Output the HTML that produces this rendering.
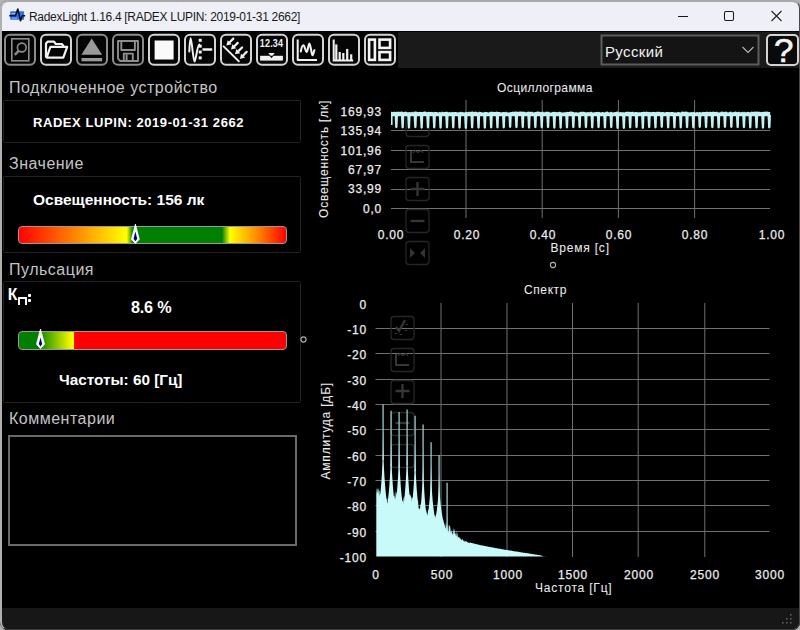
<!DOCTYPE html>
<html><head><meta charset="utf-8">
<style>
*{margin:0;padding:0;box-sizing:border-box}
html,body{width:800px;height:630px;overflow:hidden;background:#b4b4b4}
body{position:relative;font-family:"Liberation Sans",sans-serif}
.a{position:absolute}
#win{position:absolute;left:0;top:0;width:800px;height:630px;background:#000;border-radius:8px;overflow:hidden}
#frame{position:absolute;left:0;top:0;width:800px;height:630px;border-style:solid;border-width:2px 1.2px 1.2px 2px;border-color:#a8a8a8 #484848 #3c3c3c #b0b0b0;border-radius:8px;z-index:50}
#title{position:absolute;left:0;top:0;width:800px;height:31px;background:#eff0f7}
#ttext{position:absolute;left:29px;top:9.9px;font-size:12px;letter-spacing:-0.3px;color:#1a1a1a;white-space:nowrap}
#tb{position:absolute;left:0;top:31px;width:800px;height:36.5px;background:#1a1a1a}
.btn{position:absolute;top:34px;width:32px;height:32px}
.hdr{position:absolute;left:9px;font-size:16px;letter-spacing:0.5px;color:#c4c4c4;white-space:nowrap}
.box{position:absolute;left:3.4px;width:297.6px;border:1px solid #222;border-radius:1.5px}
.bold{position:absolute;font-weight:bold;color:#fff;white-space:nowrap}
.cl{position:absolute;font-size:12px;letter-spacing:0.8px;color:#ececec;white-space:nowrap;-webkit-text-stroke:0.25px #ececec}
.yl{text-align:right;width:60px}
.xl{text-align:center;width:50px}
#status{position:absolute;left:0;top:608px;width:800px;height:20.5px;background:#171717}
</style></head><body>
<div id="win">
  <div id="title">
    <svg class="a" style="left:8px;top:6px" width="20" height="18" viewBox="0 0 20 18">
      <rect x="2.2" y="5.2" width="13.9" height="8.6" rx="0.8" fill="#2f72f0"/>
      <path d="M3.5 7.5 L9 7.5 M4 12.2 L9 12.2" stroke="#9fc0ff" stroke-width="0.8"/>
      <path d="M1.2 9.7 L7.5 9.7 L9.8 3 L12.5 14.8 L14.3 9.7 L17.2 9.7" stroke="#111" stroke-width="1.6" fill="none" stroke-linejoin="round"/>
    </svg>
    <div id="ttext">RadexLight 1.16.4 [RADEX LUPIN: 2019-01-31 2662]</div>
    <svg class="a" style="left:670px;top:0" width="128" height="31">
      <line x1="8" y1="16.5" x2="18" y2="16.5" stroke="#1a1a1a" stroke-width="1"/>
      <rect x="54.5" y="11.5" width="9" height="9" rx="1.5" stroke="#1a1a1a" stroke-width="1.05" fill="none"/>
      <path d="M101.5 11 L111.5 21 M111.5 11 L101.5 21" stroke="#222" stroke-width="1.1"/>
    </svg>
  </div>
  <div id="tb"></div>
<svg class="a" style="left:0;top:0" width="800" height="70" viewBox="0 0 800 70">
<rect x="0" y="31" width="800" height="1" fill="#000"/>
<rect x="2" y="31" width="396" height="37" fill="#000"/>
<rect x="5" y="34.7" width="30" height="30" rx="5" fill="#050505" stroke="#8c8c8c" stroke-width="2"/>
<rect x="41" y="34.7" width="30" height="30" rx="5" fill="#050505" stroke="#d4d4d4" stroke-width="2"/>
<rect x="77" y="34.7" width="30" height="30" rx="5" fill="#050505" stroke="#8c8c8c" stroke-width="2"/>
<rect x="113" y="34.7" width="30" height="30" rx="5" fill="#050505" stroke="#8c8c8c" stroke-width="2"/>
<rect x="149" y="34.7" width="30" height="30" rx="5" fill="#050505" stroke="#d4d4d4" stroke-width="2"/>
<rect x="185" y="34.7" width="30" height="30" rx="5" fill="#050505" stroke="#d4d4d4" stroke-width="2"/>
<rect x="221" y="34.7" width="30" height="30" rx="5" fill="#050505" stroke="#d4d4d4" stroke-width="2"/>
<rect x="257" y="34.7" width="30" height="30" rx="5" fill="#050505" stroke="#d4d4d4" stroke-width="2"/>
<rect x="293" y="34.7" width="30" height="30" rx="5" fill="#050505" stroke="#d4d4d4" stroke-width="2"/>
<rect x="329" y="34.7" width="30" height="30" rx="5" fill="#050505" stroke="#d4d4d4" stroke-width="2"/>
<rect x="365" y="34.7" width="30" height="30" rx="5" fill="#050505" stroke="#d4d4d4" stroke-width="2"/>

<!-- 1 search doc -->
<g stroke="#8c8c8c" stroke-width="1.6" fill="none">
<rect x="11.8" y="38.8" width="17" height="22"/>
<circle cx="21.8" cy="47.5" r="4.4"/>
<line x1="18.6" y1="50.8" x2="14.8" y2="54.8" stroke-width="2.4"/>
</g>
<!-- 2 folder -->
<g stroke="#f2f2f2" stroke-width="2.2" fill="none" stroke-linejoin="round">
<path d="M46 57.5 L46 43.5 L47.8 41.6 L54 41.6 L55.8 44 L61.8 44 L63.2 45.5 L63.2 46.6"/>
<path d="M46.6 57.6 L50.4 46.8 L67.2 46.8 L63.3 57.6 Z"/>
</g>
<!-- 3 eject -->
<g fill="#999">
<path d="M91.7 38.6 L102.1 54.8 L81.4 54.8 Z"/>
<rect x="81.5" y="58" width="20.6" height="3.3"/>
</g>
<!-- 4 floppy -->
<g stroke="#8e8e8e" stroke-width="1.9" fill="none" stroke-linejoin="round">
<path d="M118 41 L138 41 L138 61 L120.3 61 L118 58.7 Z"/>
<rect x="121.3" y="41" width="13.6" height="9"/>
<rect x="123.8" y="53.6" width="9" height="7.4"/>
<line x1="126.6" y1="54.2" x2="126.6" y2="60.5" stroke-width="2"/>
</g>
<!-- 5 stop -->
<rect x="154.6" y="40.5" width="19" height="19" fill="#fafafa"/>
<!-- 6 wave+dots -->
<g stroke="#f2f2f2" stroke-width="2" fill="none" stroke-linecap="round">
<path d="M189.3 51.5 C189.7 43, 190 38.3, 190.6 38.3 C191.8 38.5, 193.2 61.6, 194.5 61.6 C195.8 61.6, 197.3 44.8, 199.3 44.6"/>
<line x1="202.5" y1="49.5" x2="212.2" y2="49.5" stroke-width="2.4" stroke-linecap="butt"/>
</g>
<g fill="#f2f2f2"><rect x="198.7" y="38.8" width="3" height="3"/><rect x="198.7" y="44.7" width="3" height="3"/><rect x="198.7" y="50.5" width="3" height="3"/><rect x="198.7" y="56.4" width="3" height="3"/></g>
<!-- 7 diag arrows -->
<g fill="#f2f2f2">
<line x1="223.1" y1="45.9" x2="239.4" y2="61.9" stroke="#f2f2f2" stroke-width="2"/>
<line x1="233.3" y1="38.6" x2="229.68" y2="42.17" stroke="#f2f2f2" stroke-width="2.2" stroke-linecap="round"/>
<path d="M226.40 45.40 L227.71 40.18 L231.64 44.17 Z"/>
<line x1="237.8" y1="42.9" x2="234.30" y2="46.30" stroke="#f2f2f2" stroke-width="2.2" stroke-linecap="round"/>
<path d="M231.00 49.50 L232.35 44.29 L236.25 48.31 Z"/>
<line x1="242.1" y1="47.5" x2="238.32" y2="51.12" stroke="#f2f2f2" stroke-width="2.2" stroke-linecap="round"/>
<path d="M235.00 54.30 L236.39 49.10 L240.26 53.14 Z"/>
<line x1="246.7" y1="51.8" x2="243.08" y2="55.58" stroke="#f2f2f2" stroke-width="2.2" stroke-linecap="round"/>
<path d="M239.90 58.90 L241.06 53.64 L245.10 57.51 Z"/>
</g>
<!-- 8 12.34 -->
<text x="0" y="0" transform="translate(271.5 46.8) scale(0.9 1)" font-family="Liberation Sans" font-weight="bold" font-size="10" fill="#f2f2f2" text-anchor="middle" letter-spacing="0.2">12.34</text>
<rect x="260.1" y="55.8" width="22.8" height="4.8" fill="#f2f2f2"/>
<path d="M268.2 53 L274.8 53 L271.5 56.8 Z" fill="#f2f2f2"/><path d="M269.5 55.8 L273.5 55.8 L271.5 58.2 Z" fill="#0a0a0a"/>
<!-- 9 wave chart -->
<g stroke="#f2f2f2" stroke-width="2" fill="none" stroke-linecap="round" stroke-linejoin="round">
<path d="M297.7 39.5 L297.7 60.1 L317 60.1" stroke-linecap="butt"/>
<path d="M300.8 51.5 C301.8 46, 302.8 45.2, 303.6 45.3 C304.6 45.5, 305.6 52, 306.7 52 C307.8 52, 308.4 43.5, 309.4 43.5 C310.6 43.5, 311.4 55.2, 312.5 55.2 C313.4 55.2, 313.8 51.5, 314.4 50.3" stroke-width="2.1"/>
</g>
<!-- 10 histogram -->
<g stroke="#f2f2f2" stroke-width="2" fill="none">
<path d="M333.7 39.5 L333.7 60.5 L353.2 60.5"/>
<line x1="336.3" y1="44.4" x2="336.3" y2="60" stroke-width="2.2"/>
<line x1="339.7" y1="52" x2="339.7" y2="60" stroke-width="2.2"/>
<line x1="343.3" y1="53" x2="343.3" y2="60" stroke-width="2.2"/>
<line x1="347.2" y1="48.9" x2="347.2" y2="60" stroke-width="2.2"/>
<line x1="351.2" y1="54.3" x2="351.2" y2="60" stroke-width="2.2"/>
</g>
<!-- 11 layout -->
<g stroke="#f4f4f4" stroke-width="2.6" fill="none">
<rect x="369.1" y="39.6" width="5.8" height="20.3"/>
<rect x="379.5" y="39.6" width="10.6" height="8.3"/>
<rect x="379.5" y="52.1" width="10.6" height="7.8"/>
</g>

<!-- combobox -->
<rect x="601.5" y="35.5" width="157" height="29" fill="#141414" stroke="#5c5c5c" stroke-width="2"/>
<path d="M742.5 47 L748 52.5 L753.5 47" stroke="#b8b8b8" stroke-width="1.1" fill="none"/>
<rect x="767" y="35" width="31" height="30" rx="4" fill="#0a0a0a" stroke="#d4d4d4" stroke-width="2"/>
</svg>
<div class="a" style="left:605px;top:42.9px;font-size:15px;letter-spacing:0.35px;color:#f0f0f0;white-space:nowrap">Русский</div>
<div class="a" style="left:773.5px;top:31.8px;font-size:33px;color:#f4f4f4;white-space:nowrap;-webkit-text-stroke:0.6px #f4f4f4;transform:scaleX(1.06);transform-origin:0 0">?</div>

<div class="hdr" style="top:78.5px">Подключенное устройство</div>
<div class="box" style="top:100px;height:43px"></div>
<div class="bold" style="left:33px;top:115.2px;font-size:13px;letter-spacing:0.57px">RADEX LUPIN: 2019-01-31 2662</div>
<div class="hdr" style="top:155px">Значение</div>
<div class="box" style="top:175.5px;height:77px"></div>
<div class="bold" style="left:33px;top:191px;font-size:15.5px">Освещенность: 156 лк</div>
<div class="a" style="left:17.5px;top:225.6px;width:269px;height:18.4px;border:1.6px solid #9a989c;border-radius:4px;background:linear-gradient(90deg,#ff0000 0%,#ff8000 20%,#ffff00 40.3%,#008000 42.7%,#008000 76%,#ffff00 79%,#ff8000 90%,#ff0000 100%)"></div>
<svg class="a" style="left:125px;top:220px" width="21" height="28" viewBox="0 0 21 28">
<path d="M10.4 4.1 L14.3 19.3 L10.4 23.5 L6.5 19.3 Z" fill="#fff" stroke="#fff" stroke-width="0.8" stroke-linejoin="round"/>
<path d="M10.4 11.5 L12.2 18.8 L10.4 21.2 L8.6 18.8 Z" fill="#00007a"/>
</svg>
<div class="hdr" style="top:260.5px">Пульсация</div>
<div class="box" style="top:281px;height:122px"></div>
<div class="bold" style="left:7.7px;top:286.2px;font-size:15.8px">К</div>
<div class="a" style="left:18.3px;top:297.3px;width:8.8px;height:7.5px;border:2.6px solid #fafafa;border-bottom:none;border-radius:1px 1px 0 0"></div>
<div class="a" style="left:28px;top:294px;width:3.2px;height:2.8px;background:#fafafa;border-radius:0.8px"></div>
<div class="a" style="left:28px;top:299.3px;width:3.2px;height:2.8px;background:#fafafa;border-radius:0.8px"></div>
<div class="bold" style="left:131px;top:297.6px;font-size:16.2px;letter-spacing:-0.2px">8.6 %</div>
<div class="a" style="left:17.5px;top:331px;width:269px;height:18.6px;border:1.6px solid #9a989c;border-radius:4px;background:linear-gradient(90deg,#008000 0%,#008000 7%,#ffff00 20%,#ffff00 20.5%,#ff0000 20.8%,#ff0000 100%)"></div>
<svg class="a" style="left:30px;top:325px" width="21" height="28" viewBox="0 0 21 28">
<path d="M10.5 4.1 L14.5 19.2 L10.5 23.7 L6.5 19.2 Z" fill="#fff" stroke="#fff" stroke-width="0.8" stroke-linejoin="round"/>
<path d="M10.5 12.5 L12.2 19 L10.5 21.4 L8.8 19 Z" fill="#00007a"/>
</svg>
<svg class="a" style="left:299px;top:335px" width="9" height="9"><circle cx="4.5" cy="4.5" r="2.6" stroke="#b0b0b0" stroke-width="1.1" fill="none"/></svg>
<div class="bold" style="left:59px;top:371px;font-size:15.3px">Частоты: 60 [Гц]</div>
<div class="hdr" style="top:410px">Комментарии</div>
<div class="a" style="left:7.5px;top:434.5px;width:289px;height:111px;border:2px solid #6a6a6a"></div>
<svg class="a" style="left:0;top:0" width="800" height="630" viewBox="0 0 800 630">
<!--CHARTS-->
<line x1="391" y1="130.5" x2="770" y2="130.5" stroke="#707070" stroke-width="1"/>
<line x1="391" y1="150.5" x2="770" y2="150.5" stroke="#707070" stroke-width="1"/>
<line x1="391" y1="169.5" x2="770" y2="169.5" stroke="#707070" stroke-width="1"/>
<line x1="391" y1="189.5" x2="770" y2="189.5" stroke="#707070" stroke-width="1"/>
<line x1="391" y1="208.5" x2="770" y2="208.5" stroke="#707070" stroke-width="1"/>
<line x1="466.0" y1="100" x2="466.0" y2="218" stroke="#707070" stroke-width="1"/>
<line x1="542.2" y1="100" x2="542.2" y2="218" stroke="#707070" stroke-width="1"/>
<line x1="618.4" y1="100" x2="618.4" y2="218" stroke="#707070" stroke-width="1"/>
<line x1="694.6" y1="100" x2="694.6" y2="218" stroke="#707070" stroke-width="1"/>
<rect x="406.0" y="113.5" width="23" height="23" rx="3" fill="none" stroke="#262626" stroke-width="1.3"/>
<rect x="406.0" y="145.5" width="23" height="23" rx="3" fill="none" stroke="#262626" stroke-width="1.3"/>
<rect x="406.0" y="177.5" width="23" height="23" rx="3" fill="none" stroke="#262626" stroke-width="1.3"/>
<rect x="406.0" y="209.5" width="23" height="23" rx="3" fill="none" stroke="#262626" stroke-width="1.3"/>
<rect x="406.0" y="241.5" width="23" height="23" rx="3" fill="none" stroke="#262626" stroke-width="1.3"/>
<g stroke="#363636" stroke-width="2.3" fill="none">
<path d="M411 151 L411 162 L424 162" stroke-width="2"/>
<path d="M413 153 L415 150.5 L418 152.5 L421 150.5 L423 153" stroke-width="1.2"/>
<path d="M417.5 182 L417.5 196 M410.5 189 L424.5 189"/>
<path d="M410.5 221 L424.5 221"/>
</g>
<path d="M410 248 L415 253 L410 258 Z M425 248 L420 253 L425 258 Z" fill="#333"/>
<path d="M391.0 111.8 L392.0 111.7 L393.0 112.2 L394.0 111.6 L395.0 112.0 L396.0 111.9 L397.0 111.6 L398.0 112.0 L399.0 111.5 L400.0 111.9 L401.0 111.6 L402.0 111.6 L403.0 111.9 L404.0 112.3 L405.0 111.6 L406.0 111.7 L407.0 112.1 L408.0 112.4 L409.0 112.1 L410.0 111.9 L411.0 112.5 L412.0 111.5 L413.0 112.4 L414.0 111.8 L415.0 111.6 L416.0 111.6 L417.0 111.8 L418.0 112.3 L419.0 111.7 L420.0 112.1 L421.0 112.1 L422.0 111.9 L423.0 112.0 L424.0 111.6 L425.0 111.6 L426.0 111.7 L427.0 112.2 L428.0 111.9 L429.0 111.8 L430.0 112.1 L431.0 112.0 L432.0 111.8 L433.0 112.3 L434.0 112.2 L435.0 111.7 L436.0 112.1 L437.0 112.0 L438.0 112.4 L439.0 112.2 L440.0 111.8 L441.0 112.5 L442.0 111.6 L443.0 111.9 L444.0 112.3 L445.0 111.7 L446.0 112.0 L447.0 111.5 L448.0 112.2 L449.0 112.3 L450.0 112.1 L451.0 112.4 L452.0 111.8 L453.0 112.2 L454.0 112.1 L455.0 112.1 L456.0 112.0 L457.0 112.3 L458.0 112.4 L459.0 112.0 L460.0 112.2 L461.0 111.6 L462.0 112.2 L463.0 112.1 L464.0 112.5 L465.0 112.3 L466.0 111.8 L467.0 111.9 L468.0 112.2 L469.0 111.5 L470.0 112.0 L471.0 111.7 L472.0 111.6 L473.0 111.6 L474.0 112.3 L475.0 111.6 L476.0 111.7 L477.0 111.9 L478.0 112.4 L479.0 111.6 L480.0 111.9 L481.0 112.0 L482.0 112.4 L483.0 112.3 L484.0 112.4 L485.0 111.8 L486.0 111.9 L487.0 111.9 L488.0 112.4 L489.0 112.5 L490.0 111.7 L491.0 111.7 L492.0 111.7 L493.0 111.7 L494.0 112.0 L495.0 112.1 L496.0 111.8 L497.0 111.5 L498.0 111.9 L499.0 111.9 L500.0 112.1 L501.0 112.5 L502.0 112.2 L503.0 112.0 L504.0 112.1 L505.0 112.2 L506.0 111.6 L507.0 112.4 L508.0 112.3 L509.0 112.4 L510.0 112.3 L511.0 111.9 L512.0 111.9 L513.0 111.6 L514.0 112.1 L515.0 111.6 L516.0 111.6 L517.0 111.7 L518.0 111.7 L519.0 111.8 L520.0 111.6 L521.0 111.5 L522.0 111.7 L523.0 111.6 L524.0 111.9 L525.0 111.5 L526.0 112.4 L527.0 112.1 L528.0 111.6 L529.0 111.8 L530.0 111.8 L531.0 111.9 L532.0 111.6 L533.0 112.3 L534.0 112.5 L535.0 112.0 L536.0 112.0 L537.0 111.6 L538.0 111.6 L539.0 111.8 L540.0 111.8 L541.0 112.3 L542.0 111.7 L543.0 111.5 L544.0 112.5 L545.0 112.0 L546.0 111.6 L547.0 112.0 L548.0 111.5 L549.0 112.0 L550.0 112.5 L551.0 112.4 L552.0 112.2 L553.0 111.8 L554.0 111.9 L555.0 111.7 L556.0 112.3 L557.0 112.0 L558.0 112.3 L559.0 111.8 L560.0 111.7 L561.0 112.3 L562.0 112.5 L563.0 112.4 L564.0 112.3 L565.0 112.3 L566.0 112.2 L567.0 111.7 L568.0 112.0 L569.0 111.9 L570.0 111.5 L571.0 111.5 L572.0 111.8 L573.0 111.8 L574.0 112.2 L575.0 112.5 L576.0 111.9 L577.0 112.4 L578.0 112.5 L579.0 112.5 L580.0 111.9 L581.0 111.7 L582.0 111.7 L583.0 111.7 L584.0 111.7 L585.0 112.1 L586.0 112.4 L587.0 112.3 L588.0 112.0 L589.0 112.2 L590.0 112.3 L591.0 111.6 L592.0 112.2 L593.0 112.4 L594.0 112.3 L595.0 112.3 L596.0 112.0 L597.0 111.7 L598.0 112.3 L599.0 111.8 L600.0 112.3 L601.0 112.5 L602.0 111.9 L603.0 111.9 L604.0 112.4 L605.0 112.2 L606.0 111.7 L607.0 111.6 L608.0 111.7 L609.0 112.4 L610.0 112.3 L611.0 111.6 L612.0 112.3 L613.0 112.5 L614.0 112.2 L615.0 111.9 L616.0 112.0 L617.0 111.6 L618.0 111.5 L619.0 112.5 L620.0 112.1 L621.0 112.0 L622.0 112.4 L623.0 111.9 L624.0 112.4 L625.0 112.3 L626.0 111.7 L627.0 111.8 L628.0 111.8 L629.0 111.7 L630.0 112.1 L631.0 111.8 L632.0 111.9 L633.0 111.6 L634.0 112.4 L635.0 111.9 L636.0 112.0 L637.0 112.1 L638.0 112.4 L639.0 111.9 L640.0 112.4 L641.0 112.0 L642.0 112.0 L643.0 112.0 L644.0 111.5 L645.0 111.9 L646.0 111.7 L647.0 111.5 L648.0 112.3 L649.0 111.7 L650.0 112.0 L651.0 112.2 L652.0 112.1 L653.0 111.8 L654.0 112.0 L655.0 112.1 L656.0 112.3 L657.0 111.6 L658.0 112.1 L659.0 111.7 L660.0 111.8 L661.0 112.3 L662.0 112.0 L663.0 112.1 L664.0 112.3 L665.0 112.4 L666.0 111.9 L667.0 112.1 L668.0 112.0 L669.0 112.0 L670.0 112.2 L671.0 112.0 L672.0 112.0 L673.0 112.0 L674.0 112.4 L675.0 112.2 L676.0 112.4 L677.0 112.4 L678.0 111.8 L679.0 112.1 L680.0 112.4 L681.0 112.3 L682.0 111.6 L683.0 111.6 L684.0 111.9 L685.0 111.6 L686.0 111.7 L687.0 111.6 L688.0 112.2 L689.0 112.3 L690.0 112.4 L691.0 111.7 L692.0 112.2 L693.0 112.2 L694.0 111.6 L695.0 112.4 L696.0 112.5 L697.0 111.7 L698.0 112.5 L699.0 111.9 L700.0 112.0 L701.0 112.5 L702.0 112.3 L703.0 111.7 L704.0 111.9 L705.0 112.0 L706.0 111.8 L707.0 111.7 L708.0 111.8 L709.0 112.2 L710.0 111.5 L711.0 112.1 L712.0 111.9 L713.0 111.5 L714.0 111.8 L715.0 112.1 L716.0 112.0 L717.0 111.6 L718.0 112.5 L719.0 112.3 L720.0 112.5 L721.0 111.6 L722.0 111.8 L723.0 111.5 L724.0 112.3 L725.0 111.8 L726.0 111.6 L727.0 111.9 L728.0 112.4 L729.0 112.3 L730.0 111.8 L731.0 111.6 L732.0 112.4 L733.0 112.1 L734.0 112.2 L735.0 111.6 L736.0 111.6 L737.0 112.2 L738.0 111.9 L739.0 111.6 L740.0 112.4 L741.0 112.1 L742.0 112.3 L743.0 111.6 L744.0 112.4 L745.0 111.6 L746.0 112.4 L747.0 112.0 L748.0 111.8 L749.0 112.1 L750.0 112.4 L751.0 111.8 L752.0 111.6 L753.0 112.0 L754.0 111.7 L755.0 111.6 L756.0 111.7 L757.0 111.6 L758.0 111.7 L759.0 111.8 L760.0 111.8 L761.0 112.3 L762.0 111.8 L763.0 112.0 L764.0 111.7 L765.0 111.8 L766.0 111.5 L767.0 111.8 L768.0 111.5 L769.0 112.2 L770.0 112.1 L770 116.2 L391 116.2 Z" fill="#c4f2f2"/>
<path d="M394.6 115 L398.0 115 L397.5 127.3 Q396.3 129.3 395.2 127.3 Z" fill="#c4f2f2"/>
<path d="M400.9 115 L404.3 115 L403.8 127.5 Q402.6 129.5 401.5 127.5 Z" fill="#c4f2f2"/>
<path d="M407.2 115 L410.6 115 L410.1 127.8 Q408.9 129.8 407.8 127.8 Z" fill="#c4f2f2"/>
<path d="M413.6 115 L417.0 115 L416.5 127.2 Q415.3 129.2 414.2 127.2 Z" fill="#c4f2f2"/>
<path d="M419.9 115 L423.3 115 L422.8 127.8 Q421.6 129.8 420.5 127.8 Z" fill="#c4f2f2"/>
<path d="M426.2 115 L429.6 115 L429.1 127.4 Q427.9 129.4 426.8 127.4 Z" fill="#c4f2f2"/>
<path d="M432.5 115 L435.9 115 L435.4 127.5 Q434.2 129.5 433.1 127.5 Z" fill="#c4f2f2"/>
<path d="M438.8 115 L442.2 115 L441.7 127.8 Q440.5 129.8 439.4 127.8 Z" fill="#c4f2f2"/>
<path d="M445.2 115 L448.6 115 L448.1 127.4 Q446.9 129.4 445.8 127.4 Z" fill="#c4f2f2"/>
<path d="M451.5 115 L454.9 115 L454.4 127.5 Q453.2 129.5 452.1 127.5 Z" fill="#c4f2f2"/>
<path d="M457.8 115 L461.2 115 L460.7 127.7 Q459.5 129.7 458.4 127.7 Z" fill="#c4f2f2"/>
<path d="M464.1 115 L467.5 115 L467.0 127.9 Q465.8 129.9 464.7 127.9 Z" fill="#c4f2f2"/>
<path d="M470.4 115 L473.8 115 L473.3 127.4 Q472.1 129.4 471.0 127.4 Z" fill="#c4f2f2"/>
<path d="M476.8 115 L480.2 115 L479.7 127.8 Q478.5 129.8 477.4 127.8 Z" fill="#c4f2f2"/>
<path d="M483.1 115 L486.5 115 L486.0 127.7 Q484.8 129.7 483.7 127.7 Z" fill="#c4f2f2"/>
<path d="M489.4 115 L492.8 115 L492.3 127.6 Q491.1 129.6 490.0 127.6 Z" fill="#c4f2f2"/>
<path d="M495.7 115 L499.1 115 L498.6 127.4 Q497.4 129.4 496.3 127.4 Z" fill="#c4f2f2"/>
<path d="M502.0 115 L505.4 115 L504.9 127.4 Q503.7 129.4 502.6 127.4 Z" fill="#c4f2f2"/>
<path d="M508.4 115 L511.8 115 L511.3 127.1 Q510.1 129.1 509.0 127.1 Z" fill="#c4f2f2"/>
<path d="M514.7 115 L518.1 115 L517.6 127.2 Q516.4 129.2 515.3 127.2 Z" fill="#c4f2f2"/>
<path d="M521.0 115 L524.4 115 L523.9 127.2 Q522.7 129.2 521.6 127.2 Z" fill="#c4f2f2"/>
<path d="M527.3 115 L530.7 115 L530.2 127.7 Q529.0 129.7 527.9 127.7 Z" fill="#c4f2f2"/>
<path d="M533.6 115 L537.0 115 L536.5 127.3 Q535.3 129.3 534.2 127.3 Z" fill="#c4f2f2"/>
<path d="M540.0 115 L543.4 115 L542.9 127.2 Q541.7 129.2 540.6 127.2 Z" fill="#c4f2f2"/>
<path d="M546.3 115 L549.7 115 L549.2 127.2 Q548.0 129.2 546.9 127.2 Z" fill="#c4f2f2"/>
<path d="M552.6 115 L556.0 115 L555.5 127.8 Q554.3 129.8 553.2 127.8 Z" fill="#c4f2f2"/>
<path d="M558.9 115 L562.3 115 L561.8 127.8 Q560.6 129.8 559.5 127.8 Z" fill="#c4f2f2"/>
<path d="M565.2 115 L568.6 115 L568.1 127.6 Q566.9 129.6 565.8 127.6 Z" fill="#c4f2f2"/>
<path d="M571.6 115 L575.0 115 L574.5 127.3 Q573.3 129.3 572.2 127.3 Z" fill="#c4f2f2"/>
<path d="M577.9 115 L581.3 115 L580.8 127.3 Q579.6 129.3 578.5 127.3 Z" fill="#c4f2f2"/>
<path d="M584.2 115 L587.6 115 L587.1 127.3 Q585.9 129.3 584.8 127.3 Z" fill="#c4f2f2"/>
<path d="M590.5 115 L593.9 115 L593.4 127.5 Q592.2 129.5 591.1 127.5 Z" fill="#c4f2f2"/>
<path d="M596.8 115 L600.2 115 L599.7 127.2 Q598.5 129.2 597.4 127.2 Z" fill="#c4f2f2"/>
<path d="M603.2 115 L606.6 115 L606.1 127.5 Q604.9 129.5 603.8 127.5 Z" fill="#c4f2f2"/>
<path d="M609.5 115 L612.9 115 L612.4 127.3 Q611.2 129.3 610.1 127.3 Z" fill="#c4f2f2"/>
<path d="M615.8 115 L619.2 115 L618.7 127.9 Q617.5 129.9 616.4 127.9 Z" fill="#c4f2f2"/>
<path d="M622.1 115 L625.5 115 L625.0 127.9 Q623.8 129.9 622.7 127.9 Z" fill="#c4f2f2"/>
<path d="M628.4 115 L631.8 115 L631.3 127.5 Q630.1 129.5 629.0 127.5 Z" fill="#c4f2f2"/>
<path d="M634.8 115 L638.2 115 L637.7 127.3 Q636.5 129.3 635.4 127.3 Z" fill="#c4f2f2"/>
<path d="M641.1 115 L644.5 115 L644.0 127.9 Q642.8 129.9 641.7 127.9 Z" fill="#c4f2f2"/>
<path d="M647.4 115 L650.8 115 L650.3 127.3 Q649.1 129.3 648.0 127.3 Z" fill="#c4f2f2"/>
<path d="M653.7 115 L657.1 115 L656.6 127.4 Q655.4 129.4 654.3 127.4 Z" fill="#c4f2f2"/>
<path d="M660.0 115 L663.4 115 L662.9 127.1 Q661.7 129.1 660.6 127.1 Z" fill="#c4f2f2"/>
<path d="M666.4 115 L669.8 115 L669.3 127.4 Q668.1 129.4 667.0 127.4 Z" fill="#c4f2f2"/>
<path d="M672.7 115 L676.1 115 L675.6 127.5 Q674.4 129.5 673.3 127.5 Z" fill="#c4f2f2"/>
<path d="M679.0 115 L682.4 115 L681.9 127.5 Q680.7 129.5 679.6 127.5 Z" fill="#c4f2f2"/>
<path d="M685.3 115 L688.7 115 L688.2 127.3 Q687.0 129.3 685.9 127.3 Z" fill="#c4f2f2"/>
<path d="M691.6 115 L695.0 115 L694.5 127.5 Q693.3 129.5 692.2 127.5 Z" fill="#c4f2f2"/>
<path d="M698.0 115 L701.4 115 L700.9 127.1 Q699.7 129.1 698.6 127.1 Z" fill="#c4f2f2"/>
<path d="M704.3 115 L707.7 115 L707.2 127.3 Q706.0 129.3 704.9 127.3 Z" fill="#c4f2f2"/>
<path d="M710.6 115 L714.0 115 L713.5 127.2 Q712.3 129.2 711.2 127.2 Z" fill="#c4f2f2"/>
<path d="M716.9 115 L720.3 115 L719.8 127.4 Q718.6 129.4 717.5 127.4 Z" fill="#c4f2f2"/>
<path d="M723.2 115 L726.6 115 L726.1 127.1 Q724.9 129.1 723.8 127.1 Z" fill="#c4f2f2"/>
<path d="M729.6 115 L733.0 115 L732.5 127.1 Q731.3 129.1 730.2 127.1 Z" fill="#c4f2f2"/>
<path d="M735.9 115 L739.3 115 L738.8 127.3 Q737.6 129.3 736.5 127.3 Z" fill="#c4f2f2"/>
<path d="M742.2 115 L745.6 115 L745.1 127.3 Q743.9 129.3 742.8 127.3 Z" fill="#c4f2f2"/>
<path d="M748.5 115 L751.9 115 L751.4 127.6 Q750.2 129.6 749.1 127.6 Z" fill="#c4f2f2"/>
<path d="M754.8 115 L758.2 115 L757.7 127.5 Q756.5 129.5 755.4 127.5 Z" fill="#c4f2f2"/>
<path d="M761.2 115 L764.6 115 L764.1 127.7 Q762.9 129.7 761.8 127.7 Z" fill="#c4f2f2"/>
<path d="M767.5 115 L770.9 115 L770.4 127.6 Q769.2 129.6 768.1 127.6 Z" fill="#c4f2f2"/>
<rect x="391" y="112" width="1.6" height="13" fill="#c4f2f2"/>
<rect x="768.6" y="112" width="1.6" height="15" fill="#c4f2f2"/>
<line x1="375.5" y1="328.5" x2="769.5" y2="328.5" stroke="#707070" stroke-width="1"/>
<line x1="375.5" y1="353.5" x2="769.5" y2="353.5" stroke="#707070" stroke-width="1"/>
<line x1="375.5" y1="379.5" x2="769.5" y2="379.5" stroke="#707070" stroke-width="1"/>
<line x1="375.5" y1="404.5" x2="769.5" y2="404.5" stroke="#707070" stroke-width="1"/>
<line x1="375.5" y1="429.5" x2="769.5" y2="429.5" stroke="#707070" stroke-width="1"/>
<line x1="375.5" y1="455.5" x2="769.5" y2="455.5" stroke="#707070" stroke-width="1"/>
<line x1="375.5" y1="480.5" x2="769.5" y2="480.5" stroke="#707070" stroke-width="1"/>
<line x1="375.5" y1="505.5" x2="769.5" y2="505.5" stroke="#707070" stroke-width="1"/>
<line x1="375.5" y1="531.5" x2="769.5" y2="531.5" stroke="#707070" stroke-width="1"/>
<line x1="441.0" y1="303" x2="441.0" y2="557" stroke="#707070" stroke-width="1"/>
<line x1="507.0" y1="303" x2="507.0" y2="557" stroke="#707070" stroke-width="1"/>
<line x1="572.5" y1="303" x2="572.5" y2="557" stroke="#707070" stroke-width="1"/>
<line x1="638.2" y1="303" x2="638.2" y2="557" stroke="#707070" stroke-width="1"/>
<line x1="704.8" y1="303" x2="704.8" y2="557" stroke="#707070" stroke-width="1"/>
<rect x="391.0" y="316.5" width="23" height="23" rx="3" fill="none" stroke="#262626" stroke-width="1.3"/>
<rect x="391.0" y="348.5" width="23" height="23" rx="3" fill="none" stroke="#262626" stroke-width="1.3"/>
<rect x="391.0" y="380.5" width="23" height="23" rx="3" fill="none" stroke="#262626" stroke-width="1.3"/>
<rect x="391.0" y="412.5" width="23" height="23" rx="3" fill="none" stroke="#262626" stroke-width="1.3"/>
<rect x="391.0" y="444.5" width="23" height="23" rx="3" fill="none" stroke="#262626" stroke-width="1.3"/>
<g stroke="#363636" stroke-width="2.3" fill="none">
<path d="M396 354 L396 365 L409 365" stroke-width="2"/>
<path d="M398 356 L400 353.5 L403 355.5 L406 353.5 L408 356" stroke-width="1.2"/>
<path d="M396 327 L399 331 L405 320 M407 324 L407 325 M406 330 L406 331 M401 334 L401 335 M396 333 L396 334"/>
<path d="M402.5 384 L402.5 398 M395.5 391 L409.5 391"/>
<path d="M395.5 423 L409.5 423"/>
</g>
<line x1="383.1" y1="404.4" x2="383.1" y2="460.1" stroke="#9cc8c8" stroke-width="1.3"/>
<line x1="391.1" y1="410.7" x2="391.1" y2="466.4" stroke="#9cc8c8" stroke-width="1.3"/>
<line x1="399.1" y1="412.0" x2="399.1" y2="467.6" stroke="#9cc8c8" stroke-width="1.3"/>
<line x1="407.1" y1="409.5" x2="407.1" y2="465.1" stroke="#9cc8c8" stroke-width="1.3"/>
<line x1="415.1" y1="415.8" x2="415.1" y2="471.4" stroke="#9cc8c8" stroke-width="1.3"/>
<line x1="423.1" y1="424.6" x2="423.1" y2="480.3" stroke="#9cc8c8" stroke-width="1.3"/>
<line x1="431.1" y1="442.3" x2="431.1" y2="498.0" stroke="#9cc8c8" stroke-width="1.3"/>
<line x1="439.1" y1="455.0" x2="439.1" y2="510.7" stroke="#9cc8c8" stroke-width="1.3"/>
<line x1="447.1" y1="482.8" x2="447.1" y2="538.5" stroke="#9cc8c8" stroke-width="1.3"/>
<polygon points="376.3,556.5 376.30,489.7 376.55,488.0 376.80,492.3 377.05,492.7 377.30,486.5 377.55,493.9 377.80,488.5 378.05,489.2 378.30,495.1 378.55,488.4 378.80,488.4 379.05,491.3 379.30,490.8 379.55,490.5 379.80,497.1 380.05,494.1 380.30,494.0 380.55,491.5 380.80,488.9 381.05,486.0 381.30,482.9 381.55,479.4 381.80,475.6 382.05,471.1 382.30,465.9 382.55,459.4 382.80,450.2 383.05,431.2 383.30,445.0 383.55,456.2 383.80,463.5 384.05,469.2 384.30,473.9 384.55,477.9 384.80,481.5 385.05,484.8 385.30,487.7 385.55,490.5 385.80,493.0 386.05,495.4 386.30,497.6 386.55,499.8 386.80,497.9 387.05,502.2 387.30,503.7 387.55,501.8 387.80,497.4 388.05,499.1 388.30,496.9 388.55,494.5 388.80,491.9 389.05,489.2 389.30,486.2 389.55,482.9 389.80,479.2 390.05,474.9 390.30,469.9 390.55,463.6 390.80,454.8 391.05,436.5 391.30,449.8 391.55,460.5 391.80,467.6 392.05,473.0 392.30,477.5 392.55,481.4 392.80,484.9 393.05,488.0 393.30,490.9 393.55,493.5 393.80,495.9 394.05,496.3 394.30,496.2 394.55,499.2 394.80,492.0 395.05,498.2 395.30,491.3 395.55,491.8 395.80,500.3 396.05,496.4 396.30,493.3 396.55,492.1 396.80,493.2 397.05,490.4 397.30,487.4 397.55,484.1 397.80,480.4 398.05,476.2 398.30,471.1 398.55,464.9 398.80,456.1 399.05,437.7 399.30,451.0 399.55,461.8 399.80,468.8 400.05,474.3 400.30,478.8 400.55,482.7 400.80,486.2 401.05,489.3 401.30,492.1 401.55,494.7 401.80,497.2 402.05,499.5 402.30,501.7 402.55,501.1 402.80,501.5 403.05,496.9 403.30,504.7 403.55,498.0 403.80,497.3 404.05,501.4 404.30,496.5 404.55,496.6 404.80,493.9 405.05,491.0 405.30,487.9 405.55,484.5 405.80,480.6 406.05,476.2 406.30,471.0 406.55,464.4 406.80,455.3 407.05,436.2 407.30,450.0 407.55,461.2 407.80,468.6 408.05,474.2 408.30,478.9 408.55,483.0 408.80,486.6 409.05,489.8 409.30,492.8 409.55,494.4 409.80,494.9 410.05,495.5 410.30,497.1 410.55,494.4 410.80,494.1 411.05,497.6 411.30,496.3 411.55,502.6 411.80,496.7 412.05,499.5 412.30,496.9 412.55,498.2 412.80,497.0 413.05,494.2 413.30,491.2 413.55,487.9 413.80,484.2 414.05,480.0 414.30,474.9 414.55,468.7 414.80,459.9 415.05,441.5 415.30,454.8 415.55,465.6 415.80,472.6 416.05,478.1 416.30,482.6 416.55,486.5 416.80,489.9 417.05,493.1 417.30,495.9 417.55,498.5 417.80,500.8 418.05,500.2 418.30,505.4 418.55,507.5 418.80,508.2 419.05,509.4 419.30,507.3 419.55,509.8 419.80,508.7 420.05,508.8 420.30,506.2 420.55,503.5 420.80,505.0 421.05,503.1 421.30,500.1 421.55,496.8 421.80,493.1 422.05,488.8 422.30,483.8 422.55,477.5 422.80,468.7 423.05,450.4 423.30,463.7 423.55,474.4 423.80,481.5 424.05,486.9 424.30,491.4 424.55,495.3 424.80,498.8 425.05,501.9 425.30,504.8 425.55,507.4 425.80,508.7 426.05,512.1 426.30,514.3 426.55,510.9 426.80,509.4 427.05,513.4 427.30,512.5 427.55,516.3 427.80,514.4 428.05,509.6 428.30,510.6 428.55,509.4 428.80,507.3 429.05,505.1 429.30,502.7 429.55,500.1 429.80,497.1 430.05,493.7 430.30,489.7 430.55,484.6 430.80,477.6 431.05,462.9 431.30,473.6 431.55,482.2 431.80,487.8 432.05,492.2 432.30,495.8 432.55,498.9 432.80,501.7 433.05,504.2 433.30,506.5 433.55,508.6 433.80,510.5 434.05,512.3 434.30,514.1 434.55,515.7 434.80,515.4 435.05,515.0 435.30,517.0 435.55,517.9 435.80,515.6 436.05,515.1 436.30,513.6 436.55,512.0 436.80,510.2 437.05,508.3 437.30,506.3 437.55,504.1 437.80,501.5 438.05,498.6 438.30,495.2 438.55,490.9 438.80,485.0 439.05,472.5 439.30,481.5 439.55,488.8 439.80,493.6 440.05,497.4 440.30,500.4 440.55,503.1 440.80,505.4 441.05,507.6 441.30,509.5 441.55,511.3 441.80,512.9 442.05,514.5 442.30,516.0 442.55,517.4 442.80,518.7 443.05,519.9 443.30,519.3 443.55,522.3 443.80,521.2 444.05,524.5 444.30,525.5 444.55,522.4 444.80,526.9 445.05,521.1 445.30,525.5 445.55,528.6 445.80,528.5 446.05,527.0 446.30,524.9 446.55,522.6 446.80,530.1 447.05,513.7 447.30,529.7 447.55,523.3 447.80,531.0 448.05,532.1 448.30,532.2 448.55,529.4 448.80,525.0 449.05,525.3 449.30,526.9 449.55,524.7 449.80,525.5 450.05,531.2 450.30,532.7 450.55,525.9 450.80,527.8 451.05,534.4 451.30,528.8 451.55,531.5 451.80,531.7 452.05,532.2 452.30,533.8 452.55,535.5 452.80,533.1 453.05,532.5 453.30,527.2 453.55,534.9 453.80,527.3 454.05,534.3 454.30,533.1 454.55,529.0 454.80,529.1 455.05,532.8 455.30,536.6 455.55,533.1 455.80,534.3 456.05,529.7 456.30,536.6 456.55,535.4 456.80,530.8 457.05,539.0 457.30,535.9 457.55,532.6 457.80,533.3 458.05,537.0 458.30,537.3 458.55,537.5 458.80,536.1 459.05,537.8 459.30,537.1 459.55,537.1 459.80,538.6 460.05,539.0 460.30,537.7 460.55,538.6 460.80,539.5 461.05,538.7 461.30,539.7 461.55,539.9 461.80,540.6 462.05,539.2 462.30,539.0 462.55,539.8 462.80,539.3 463.05,541.3 463.30,541.0 463.55,540.7 463.80,539.9 464.05,540.0 464.30,541.3 464.55,541.8 464.80,541.5 465.05,541.5 465.30,540.7 465.55,542.3 465.80,541.1 466.05,541.3 466.30,541.1 466.55,541.3 466.80,541.7 467.05,542.3 467.30,542.4 467.55,542.3 467.80,541.5 468.05,543.0 468.30,542.8 468.55,541.7 468.80,542.8 469.05,543.2 469.30,543.3 469.55,542.3 469.80,542.9 470.05,542.4 470.30,542.5 470.55,542.5 470.80,542.8 471.05,543.0 471.30,543.0 471.55,542.9 471.80,542.9 472.05,543.1 472.30,543.2 472.55,543.2 472.80,543.2 473.05,543.2 473.30,543.3 473.55,543.3 473.80,543.4 474.05,543.7 474.30,543.5 474.55,543.8 474.80,543.7 475.05,543.9 475.30,543.8 475.55,544.1 475.80,544.1 476.05,544.2 476.30,544.3 476.55,544.0 476.80,544.2 477.05,544.4 477.30,544.4 477.55,544.2 477.80,544.5 478.05,544.7 478.30,544.5 478.55,544.6 478.80,544.6 479.05,545.0 479.30,544.9 479.55,544.8 479.80,544.9 480.05,544.9 480.30,545.3 480.55,545.3 480.80,545.4 481.05,545.4 481.30,545.1 481.55,545.3 481.80,545.2 482.05,545.5 482.30,545.4 482.55,545.6 482.80,545.7 483.05,545.5 483.30,545.5 483.55,545.9 483.80,545.8 484.05,545.8 484.30,546.0 484.55,546.0 484.80,546.1 485.05,546.1 485.30,546.2 485.55,546.1 485.80,546.1 486.05,546.3 486.30,546.5 486.55,546.4 486.80,546.3 487.05,546.5 487.30,546.5 487.55,546.6 487.80,546.4 488.05,546.6 488.30,546.8 488.55,546.9 488.80,546.8 489.05,546.8 489.30,546.8 489.55,547.0 489.80,547.1 490.05,546.9 490.30,547.1 490.55,547.2 490.80,547.2 491.05,547.0 491.30,547.3 491.55,547.2 491.80,547.4 492.05,547.4 492.30,547.3 492.55,547.2 492.80,547.6 493.05,547.7 493.30,547.5 493.55,547.8 493.80,547.9 494.05,547.6 494.30,547.8 494.55,547.7 494.80,547.9 495.05,547.8 495.30,548.0 495.55,548.2 495.80,548.3 496.05,548.1 496.30,548.1 496.55,548.0 496.80,548.4 497.05,548.3 497.30,548.4 497.55,548.4 497.80,548.6 498.05,548.6 498.30,548.5 498.55,548.4 498.80,548.8 499.05,548.7 499.30,548.6 499.55,548.6 499.80,548.9 500.05,549.0 500.30,548.7 500.55,548.8 500.80,549.0 501.05,549.2 501.30,548.9 501.55,549.2 501.80,549.0 502.05,549.2 502.30,549.1 502.55,549.4 502.80,549.2 503.05,549.5 503.30,549.4 503.55,549.3 503.80,549.4 504.05,549.7 504.30,549.7 504.55,549.7 504.80,549.6 505.05,549.7 505.30,549.9 505.55,549.9 505.80,549.7 506.05,549.7 506.30,550.1 506.55,549.9 506.80,549.9 507.05,550.2 507.30,549.9 507.55,550.3 507.80,550.1 508.05,550.2 508.30,550.2 508.55,550.3 508.80,550.3 509.05,550.3 509.30,550.4 509.55,550.4 509.80,550.5 510.05,550.5 510.30,550.7 510.55,550.5 510.80,550.6 511.05,550.8 511.30,550.6 511.55,550.6 511.80,550.8 512.05,551.0 512.30,550.9 512.55,551.1 512.80,551.1 513.05,551.0 513.30,551.2 513.55,551.1 513.80,551.1 514.05,551.4 514.30,551.2 514.55,551.4 514.80,551.2 515.05,551.2 515.30,551.4 515.55,551.6 515.80,551.5 516.05,551.6 516.30,551.4 516.55,551.7 516.80,551.5 517.05,551.5 517.30,551.6 517.55,551.6 517.80,551.9 518.05,551.6 518.30,551.9 518.55,551.7 518.80,551.8 519.05,552.1 519.30,551.9 519.55,551.9 519.80,552.3 520.05,552.2 520.30,552.1 520.55,552.4 520.80,552.1 521.05,552.4 521.30,552.2 521.55,552.5 521.80,552.4 522.05,552.3 522.30,552.6 522.55,552.6 522.80,552.6 523.05,552.7 523.30,552.8 523.55,552.8 523.80,552.9 524.05,552.6 524.30,552.7 524.55,552.7 524.80,553.0 525.05,552.8 525.30,553.1 525.55,553.0 525.80,553.0 526.05,553.1 526.30,553.0 526.55,553.1 526.80,553.2 527.05,553.1 527.30,553.4 527.55,553.1 527.80,553.3 528.05,553.4 528.30,553.3 528.55,553.5 528.80,553.3 529.05,553.5 529.30,553.6 529.55,553.5 529.80,553.7 530.05,553.8 530.30,553.6 530.55,553.9 530.80,553.7 531.05,553.9 531.30,553.8 531.55,553.7 531.80,553.9 532.05,553.9 532.30,554.1 532.55,554.3 532.80,554.3 533.05,554.3 533.30,554.1 533.55,554.2 533.80,554.2 534.05,554.1 534.30,554.5 534.55,554.5 534.80,554.3 535.05,554.6 535.30,554.7 535.55,554.6 535.80,554.7 536.05,554.6 536.30,554.7 536.55,554.6 536.80,554.7 537.05,554.9 537.30,554.7 537.55,554.8 537.80,555.0 538.05,554.7 538.30,555.0 538.55,555.1 538.80,555.2 539.05,555.0 539.30,554.9 539.55,555.0 539.80,555.2 540.05,555.3 540.30,555.5 540.55,555.3 540.80,555.4 541.05,555.6 541.30,555.5 541.55,555.7 541.80,555.6 542.05,555.8 542.30,556.0 542.55,555.8 542.80,556.3 543.05,556.2 543.30,556.3 543.55,556.4 543.80,556.6 544.05,556.4 544.30,556.7 544.55,556.6 544.80,556.6 545.05,556.7 545.30,556.7 545.5,556.5" fill="#c8fafa"/>
<!--/CHARTS-->
</svg>
<div class="cl" style="-webkit-text-stroke:0.05px #ececec;left:497px;top:80.7px;letter-spacing:0.4px">Осциллограмма</div>
<div class="cl yl" style="left:322px;top:105px">169,93</div>
<div class="cl yl" style="left:322px;top:124px">135,94</div>
<div class="cl yl" style="left:322px;top:144px">101,96</div>
<div class="cl yl" style="left:322px;top:163px">67,97</div>
<div class="cl yl" style="left:322px;top:182px">33,99</div>
<div class="cl yl" style="left:322px;top:202px">0,0</div>
<div class="cl xl" style="left:366px;top:228px">0.00</div>
<div class="cl xl" style="left:442px;top:228px">0.20</div>
<div class="cl xl" style="left:518px;top:228px">0.40</div>
<div class="cl xl" style="left:594px;top:228px">0.60</div>
<div class="cl xl" style="left:670px;top:228px">0.80</div>
<div class="cl xl" style="left:747px;top:228px">1.00</div>
<div class="cl" style="-webkit-text-stroke:0.05px #ececec;left:550.5px;top:240.5px">Время [с]</div>
<div class="cl" style="-webkit-text-stroke:0.05px #ececec;left:264.5px;top:152px;width:118px;text-align:center;transform:rotate(-90deg)">Освещенность [лк]</div>
<svg class="a" style="left:548px;top:260px" width="10" height="10"><circle cx="5" cy="5" r="2.6" stroke="#b0b0b0" stroke-width="1.1" fill="none"/></svg>
<div class="cl" style="-webkit-text-stroke:0.05px #ececec;left:524px;top:283px;letter-spacing:0.6px">Спектр</div>
<div class="cl yl" style="left:307px;top:298px">0</div>
<div class="cl yl" style="left:307px;top:323px">-10</div>
<div class="cl yl" style="left:307px;top:348px">-20</div>
<div class="cl yl" style="left:307px;top:374px">-30</div>
<div class="cl yl" style="left:307px;top:399px">-40</div>
<div class="cl yl" style="left:307px;top:424px">-50</div>
<div class="cl yl" style="left:307px;top:450px">-60</div>
<div class="cl yl" style="left:307px;top:475px">-70</div>
<div class="cl yl" style="left:307px;top:500px">-80</div>
<div class="cl yl" style="left:307px;top:526px">-90</div>
<div class="cl yl" style="left:307px;top:551px">-100</div>
<div class="cl xl" style="left:351px;top:568px">0</div>
<div class="cl xl" style="left:417px;top:568px">500</div>
<div class="cl xl" style="left:483px;top:568px">1000</div>
<div class="cl xl" style="left:548px;top:568px">1500</div>
<div class="cl xl" style="left:614px;top:568px">2000</div>
<div class="cl xl" style="left:680px;top:568px">2500</div>
<div class="cl xl" style="left:745px;top:568px">3000</div>
<div class="cl" style="-webkit-text-stroke:0.05px #ececec;left:535px;top:580.5px">Частота [Гц]</div>
<div class="cl" style="-webkit-text-stroke:0.05px #ececec;left:277px;top:424px;width:97px;text-align:center;transform:rotate(-90deg)">Амплитуда [дБ]</div>
<div id="status"></div>
<svg class="a" style="left:780px;top:612px" width="14" height="14"><g fill="#5a5a5a"><rect x="10" y="2" width="1.6" height="1.6"/><rect x="6" y="6" width="1.6" height="1.6"/><rect x="10" y="6" width="1.6" height="1.6"/><rect x="2" y="10" width="1.6" height="1.6"/><rect x="6" y="10" width="1.6" height="1.6"/><rect x="10" y="10" width="1.6" height="1.6"/></g></svg>
</div>
<div id="frame"></div>
</body></html>
